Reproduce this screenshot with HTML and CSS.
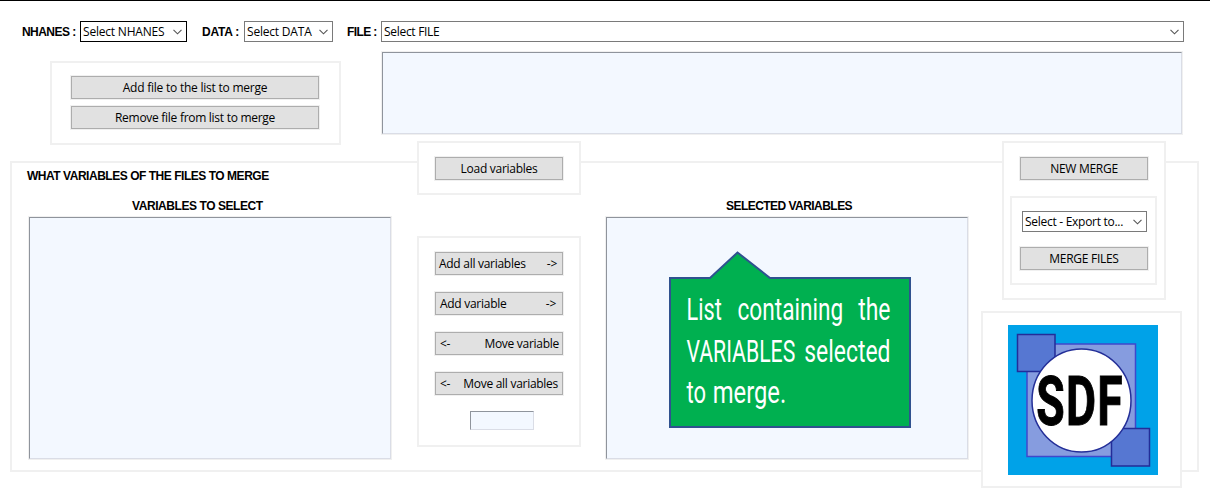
FILE: index.html
```html
<!DOCTYPE html>
<html lang="en">
<head>
<meta charset="utf-8">
<title>NHANES merge</title>
<link rel="stylesheet" href="styles.css">
</head>
<body>
<div class="toolbar">
  <span class="label label-nhanes">NHANES :</span>
  <div class="combo combo-nhanes active"><span>Select NHANES</span><svg class="chev" viewBox="0 0 9 6"><path d="M0.5 0.8 4.5 4.8 8.5 0.8"/></svg></div>
  <span class="label label-data">DATA :</span>
  <div class="combo combo-data"><span>Select DATA</span><svg class="chev" viewBox="0 0 9 6"><path d="M0.5 0.8 4.5 4.8 8.5 0.8"/></svg></div>
  <span class="label label-file">FILE :</span>
  <div class="combo combo-file"><span>Select FILE</span><svg class="chev" viewBox="0 0 9 6"><path d="M0.5 0.8 4.5 4.8 8.5 0.8"/></svg></div>
</div>
<div class="files">
  <div class="panel file-actions">
    <div class="button"><span class="t-add-file">Add file to the list to merge</span></div>
    <div class="button"><span>Remove file from list to merge</span></div>
  </div>
  <div class="list file-list"></div>
</div>
<div class="panel main">
  <div class="col-left">
    <div class="label title">WHAT VARIABLES OF THE FILES TO MERGE</div>
    <div class="label head-left">VARIABLES TO SELECT</div>
    <div class="list var-list"></div>
  </div>
  <div class="col-mid">
    <div class="panel load"><div class="button"><span>Load variables</span></div></div>
    <div class="panel moves">
      <div class="button split b1"><span>Add all variables</span><span>-&gt;</span></div>
      <div class="button split b2"><span>Add variable</span><span>-&gt;</span></div>
      <div class="button split b3"><span>&lt;-</span><span>Move variable</span></div>
      <div class="button split b4"><span>&lt;-</span><span>Move all variables</span></div>
      <div class="list entry"></div>
    </div>
  </div>
  <div class="col-selected">
    <div class="label head-selected">SELECTED VARIABLES</div>
    <div class="list var-list">
      <svg class="callout" width="246" height="180" viewBox="0 0 246 180">
        <path d="M4 28H44L71.500 2.500 104 28H244V177H4Z" fill="#00b050" stroke="#2f528f" stroke-width="2"/>
        <g class="callout-text" transform="translate(20.500 0) scale(.75 1)">
          <text x="0" y="70" textLength="47" lengthAdjust="spacingAndGlyphs">List</text>
          <text x="68" y="70" textLength="141" lengthAdjust="spacingAndGlyphs">containing</text>
          <text x="229" y="70" textLength="43" lengthAdjust="spacingAndGlyphs">the</text>
          <text x="0" y="112" textLength="145" lengthAdjust="spacingAndGlyphs">VARIABLES</text>
          <text x="157" y="112" textLength="115" lengthAdjust="spacingAndGlyphs">selected</text>
          <text x="0" y="153.500" textLength="26" lengthAdjust="spacingAndGlyphs">to</text>
          <text x="35" y="153.500" textLength="98" lengthAdjust="spacingAndGlyphs">merge.</text>
        </g>
      </svg>
    </div>
  </div>
  <div class="col-right">
    <div class="panel merge">
      <div class="button"><span>NEW MERGE</span></div>
      <div class="panel export">
        <div class="combo combo-export"><span>Select - Export to...</span><svg class="chev" viewBox="0 0 9 6"><path d="M0.5 0.8 4.5 4.8 8.5 0.8"/></svg></div>
        <div class="button"><span>MERGE FILES</span></div>
      </div>
    </div>
    <div class="panel brand">
      <svg width="150" height="150" viewBox="0 0 150 150">
        <path d="M0 0H150V150H0Z" fill="#00a2e8"/>
        <path d="M19 19H127.500V131.500H19Z" fill="#869cdf" stroke="#3f48cc" stroke-width="1.500"/>
        <path d="M9.500 9.500H47V46.500H9.500ZM103.500 103.500H141.500V141H103.500Z" fill="#5677d2" stroke="#232d98" stroke-width="1.500"/>
        <ellipse cx="73.500" cy="75.500" rx="49.500" ry="51.500" fill="#fff" stroke="#242f98" stroke-width="1.500"/>
        <text class="brand-text" transform="translate(28.200 100) scale(.68 1)" textLength="127" lengthAdjust="spacing">SDF</text>
      </svg>
    </div>
  </div>
</div>
</body>
</html>
```
FILE: styles.css
```css
* { box-sizing: border-box; }
body {
  margin: 0;
  width: 1210px;
  height: 501px;
  overflow: hidden;
  background: #fff;
  border-top: 1px solid #000;
  color: #000;
  font: 12px/16px "Open Sans", "Noto Sans", sans-serif;
  letter-spacing: -0.28px;
  white-space: nowrap;
}
.label { font: bold 12px/16px "Liberation Sans", Arial, sans-serif; letter-spacing: -0.47px; }
.toolbar { display: flex; align-items: center; height: 21px; margin: 20px 0 0 22px; }
.label-nhanes { width: 58px; letter-spacing: -0.55px; }
.label-data { width: 42px; margin-left: 15px; letter-spacing: -0.25px; }
.label-file { width: 34px; margin-left: 14px; letter-spacing: -0.6px; }
.combo {
  display: flex;
  align-items: center;
  justify-content: space-between;
  height: 21px;
  padding: 0 4px 0 2px;
  border: 1px solid #7a7a7a;
  background: #fff;
}
.combo.active { border-color: #000; }
.combo-nhanes { width: 107px; letter-spacing: -0.2px; }
.combo-data { width: 89px; letter-spacing: -0.2px; }
.combo-file { width: 803px; letter-spacing: -0.3px; }
.chev { width: 9px; height: 6px; fill: none; stroke: #555; stroke-width: 1.1; }
.panel { border: 2px solid #f0f0f0; background: #fff; }
.button {
  display: flex;
  align-items: center;
  justify-content: center;
  height: 23px;
  border: 1px solid #adadad;
  background: #e1e1e1;
  box-shadow: 0 0 0 1px #f0f0f0;
}
.t-add-file { letter-spacing: -0.23px; }
.list {
  background: #f3f8ff;
  border: 1px solid;
  border-color: #8f949c #dadde6 #dadde6 #8f949c;
  box-shadow: 0 0 0 1px #f0f0f0;
}
.files { display: flex; align-items: flex-start; height: 119px; padding-left: 50px; }
.file-actions {
  display: flex;
  flex-direction: column;
  gap: 7px;
  width: 291px;
  height: 84px;
  margin-top: 19px;
  padding: 13px 20px 0 19px;
}
.file-list { width: 800px; height: 82px; margin: 10px 0 0 41px; }
.main { display: flex; align-items: flex-start; width: 1189px; height: 311px; margin-left: 10px; }
.col-left { flex: none; width: 364px; margin-left: 15px; padding-top: 5px; }
.head-left { margin: 14px 0 3px 105px; letter-spacing: -0.43px; }
.var-list { width: 362px; height: 242px; }
.col-left .var-list { margin-left: 2px; }
.col-mid { flex: none; width: 164px; margin: -22px 0 0 26px; }
.load { height: 54px; padding: 14px 16px; }
.moves { height: 211px; margin-top: 41px; padding: 14px 16px; }
.moves .button { margin-bottom: 17px; }
.split { justify-content: space-between; padding: 0 4px 0 3px; }
.b1 { padding-right: 5px; }
.b2 { padding: 0 6px 0 4px; }
.b3 { padding: 0 3px 0 4px; }
.b4 { padding-left: 4px; }
.entry { width: 64px; height: 19px; margin: -1px 0 0 35px; box-shadow: none; }
.col-selected { flex: none; width: 362px; margin-left: 25px; padding-top: 35px; }
.head-selected { margin: 0 0 3px 120px; letter-spacing: -0.54px; }
.callout { display: block; margin: 32px 0 0 59px; }
.callout-text { font: 31px Roboto, sans-serif; font-weight: 400; fill: #fff; letter-spacing: 0; }
.col-right { flex: none; width: 201px; margin: -22px 0 0 13px; }
.merge { width: 164px; height: 159px; margin-left: 21px; padding: 14px 6px; }
.merge > .button { margin: 0 10px; }
.export { width: 147px; height: 89px; margin-top: 16px; padding: 13px 7px 0 8px; }
.combo-export { width: 125px; margin-left: 2px; letter-spacing: -0.28px; }
.export .button { width: 128px; margin-top: 15px; }
.brand { height: 177px; margin-top: 11px; padding: 12px 25px; }
.brand svg { display: block; }
.brand-text { font: bold 68px Roboto, sans-serif; letter-spacing: 0; stroke: #000; stroke-width: 1; }
```
